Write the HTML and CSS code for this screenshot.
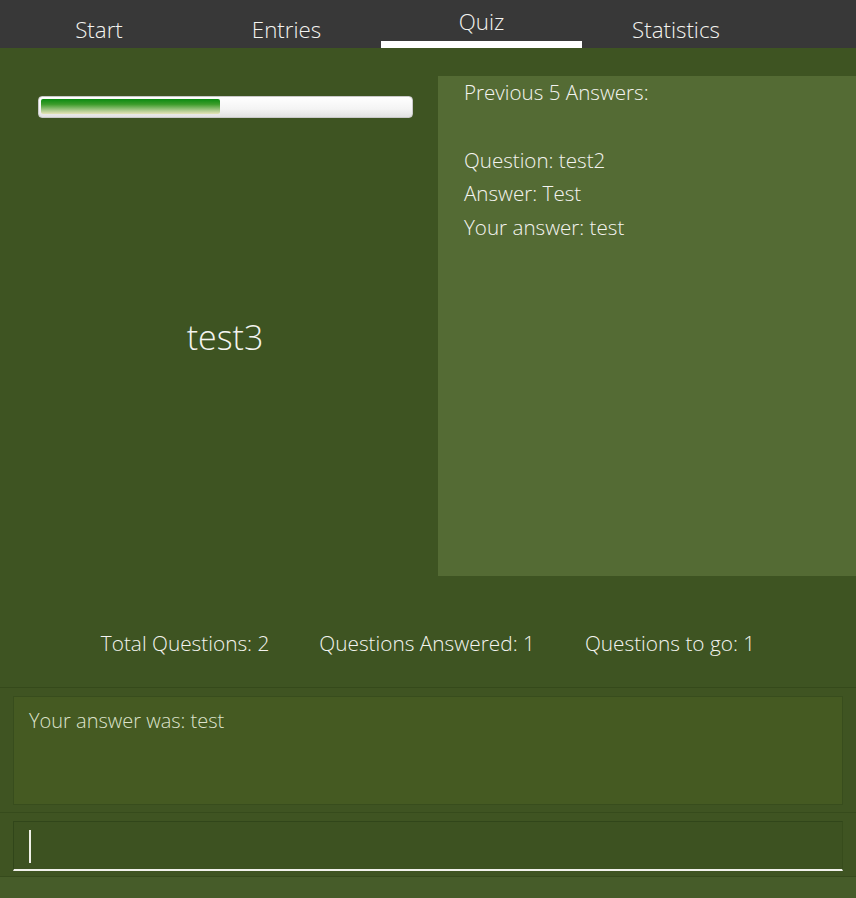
FILE: index.html
```html
<!DOCTYPE html>
<html>
<head>
<meta charset="utf-8">
<link rel="stylesheet" href="styles.css">
</head>
<body>
<div class="app">
  <nav class="tabs">
    <div class="tab">Start</div>
    <div class="tab tab-entries">Entries</div>
    <div class="tab active">Quiz</div>
    <div class="tab">Statistics</div>
  </nav>
  <main class="quiz">
    <div class="quiz-top">
      <div class="question-col">
        <div class="progress"><div class="progress-fill" style="width: 48.5%"></div></div>
        <div class="question">test3</div>
      </div>
      <section class="history">
        <p>Previous 5 Answers:</p>
        <p>&nbsp;</p>
        <p>Question: test2</p>
        <p>Answer: Test</p>
        <p>Your answer: test</p>
      </section>
    </div>
    <div class="stats">
      <span>Total Questions: 2</span>
      <span>Questions Answered: 1</span>
      <span>Questions to go: 1</span>
    </div>
  </main>
  <div class="feedback-panel">
    <div class="feedback-box">Your answer was: test</div>
  </div>
  <div class="input-panel">
    <div class="input-box"><span class="caret"></span></div>
  </div>
  <div class="footer"></div>
</div>
</body>
</html>
```
FILE: styles.css
```css
html, body {
  margin: 0;
  padding: 0;
}
body {
  width: 856px;
  height: 898px;
  overflow: hidden;
  font-family: "Open Sans", "Liberation Sans", sans-serif;
  font-weight: 300;
  color: #f4f4f0;
}
.app {
  display: flex;
  flex-direction: column;
  height: 898px;
}
.tabs {
  height: 48px;
  background: #383838;
  display: grid;
  grid-template-columns: 198px 183px 201px 188px;
  flex: none;
}
.tab {
  font-size: 22.3px;
  text-align: center;
  line-height: 22px;
  padding-top: 19px;
  box-sizing: border-box;
}
.tab-entries {
  padding-right: 6px;
}
.tab.active {
  padding-top: 11px;
  border-bottom: 7px solid #ffffff;
  height: 48px;
}
.quiz {
  background: #3e5422;
  border-bottom: 1px solid #354a1b;
  height: 639px;
  flex: none;
  display: flex;
  flex-direction: column;
}
.quiz-top {
  display: grid;
  grid-template-columns: 438px 1fr;
  padding-top: 28px;
  height: 500px;
}
.question-col {
  display: flex;
  flex-direction: column;
  padding-top: 20px;
}
.progress {
  margin-left: 38px;
  width: 375px;
  height: 22px;
  box-sizing: border-box;
  border: 1px solid #c9c9c9;
  border-radius: 4px;
  background: linear-gradient(#ffffff, #f4f4f4 60%, #e2e2e2);
  padding: 2px;
}
.progress-fill {
  height: 15px;
  border-radius: 2px;
  background: linear-gradient(#0b8a12, #3c9c2a 35%, #a8c98a 75%, #e6e4b8);
}
.question {
  flex: 1;
  display: flex;
  align-items: center;
  justify-content: center;
  padding-left: 12px;
  padding-bottom: 20px;
  font-size: 34px;
}
.history {
  background: #546b34;
  padding: 0 26px;
  font-size: 20.6px;
}
.history p {
  margin: 0;
  line-height: 33.8px;
}
.stats {
  flex: 1;
  display: flex;
  justify-content: center;
  gap: 50px;
  padding-top: 53px;
  font-size: 20.8px;
}
.feedback-panel {
  height: 125px;
  flex: none;
  background: #3f5422;
  border-bottom: 1px solid #364b1c;
  padding: 8px 13px 0;
  box-sizing: border-box;
}
.feedback-box {
  height: 109px;
  box-sizing: border-box;
  border: 1px solid #384d1d;
  background: #455a22;
  color: #dde2cc;
  font-size: 20px;
  padding: 10px 15px;
}
.input-panel {
  height: 64px;
  flex: none;
  background: #3f5422;
  border-bottom: 1px solid #364b1c;
  padding: 8px 13px 0;
  box-sizing: border-box;
}
.input-box {
  height: 50px;
  box-sizing: border-box;
  background: #3d5221;
  border-top: 1px solid #31461a;
  border-left: 1px solid #31461a;
  border-right: 1px solid #374c1c;
  border-bottom: 2px solid #f2f2ec;
  padding: 8px 15px;
}
.caret {
  display: block;
  width: 2px;
  height: 33px;
  background: #f0f0e8;
}
.footer {
  flex: 1;
  background: #465c29;
}
```
